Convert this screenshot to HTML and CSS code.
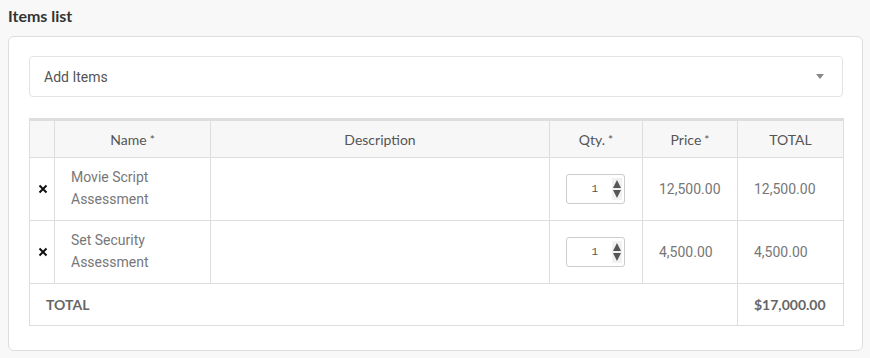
FILE: index.html
```html
<!DOCTYPE html>
<html>
<head>
<meta charset="utf-8">
<link rel="stylesheet" href="styles.css">
</head>
<body>
<h2 class="title">Items list</h2>
<div class="card">
  <div class="select">
    <span>Add Items</span>
    <span class="caret"></span>
  </div>
  <table class="items">
    <colgroup>
      <col class="c-x"><col class="c-name"><col class="c-desc"><col class="c-qty"><col class="c-price"><col class="c-total">
    </colgroup>
    <thead>
      <tr>
        <th></th>
        <th>Name<span class="req">*</span></th>
        <th>Description</th>
        <th>Qty.<span class="req">*</span></th>
        <th>Price<span class="req">*</span></th>
        <th>TOTAL</th>
      </tr>
    </thead>
    <tbody>
      <tr>
        <td class="x"><svg class="xicon" viewBox="0 0 10 10" width="10" height="10"><path d="M1.5 1.5 L8.5 8.5 M8.5 1.5 L1.5 8.5" stroke="#111" stroke-width="2" stroke-linecap="butt"/></svg></td>
        <td class="name">Movie Script<br>Assessment</td>
        <td></td>
        <td class="qty"><div class="spin"><span class="val">1</span><span class="arrows"><span class="up"></span><span class="down"></span></span></div></td>
        <td class="num">12,500.00</td>
        <td class="num">12,500.00</td>
      </tr>
      <tr>
        <td class="x"><svg class="xicon" viewBox="0 0 10 10" width="10" height="10"><path d="M1.5 1.5 L8.5 8.5 M8.5 1.5 L1.5 8.5" stroke="#111" stroke-width="2" stroke-linecap="butt"/></svg></td>
        <td class="name">Set Security<br>Assessment</td>
        <td></td>
        <td class="qty"><div class="spin"><span class="val">1</span><span class="arrows"><span class="up"></span><span class="down"></span></span></div></td>
        <td class="num">4,500.00</td>
        <td class="num">4,500.00</td>
      </tr>
      <tr class="total">
        <td colspan="5" class="tlabel">TOTAL</td>
        <td class="tval">$17,000.00</td>
      </tr>
    </tbody>
  </table>
</div>
</body>
</html>
```
FILE: styles.css
```css
html, body {
  margin: 0;
  padding: 0;
  background: #f8f8f8;
}
body {
  padding: 6px 8px 0 8px;
  font-family: Lato, "Liberation Sans", sans-serif;
}
.title {
  margin: 0 0 12px 0;
  font-size: 16px;
  font-weight: 700;
  color: #333;
  line-height: 20px;
  height: 18px;
}
.card {
  background: #fff;
  border: 1px solid #ddd;
  border-radius: 6px;
  padding: 19px 19px 24px 20px;
  width: 814px;
}
.select {
  height: 39px;
  border: 1px solid #e3e3e3;
  border-radius: 4px;
  display: flex;
  align-items: center;
  justify-content: space-between;
  padding: 0 18px 0 14px;
  font-family: Roboto, "Liberation Sans", sans-serif;
  font-size: 14px;
  color: #555;
}
.caret {
  width: 0;
  height: 0;
  border-left: 4px solid transparent;
  border-right: 4px solid transparent;
  border-top: 5px solid #888;
}
.items {
  margin-top: 21px;
  width: 814px;
  border-collapse: collapse;
  table-layout: fixed;
  border: 1px solid #ddd;
  border-top: 3px solid #ddd;
}
.c-x { width: 25px; }
.c-name { width: 156px; }
.c-desc { width: 339px; }
.c-qty { width: 93px; }
.c-price { width: 95px; }
.c-total { width: 106px; }
th, td {
  border: 1px solid #ddd;
  padding: 0;
}
th {
  background: #f7f7f7;
  height: 36px;
  font-weight: 400;
  font-size: 14px;
  color: #555;
  text-align: center;
}
.req {
  font-size: 12px;
  vertical-align: 1px;
  margin-left: 3px;
}
td {
  height: 62px;
  font-family: Roboto, "Liberation Sans", sans-serif;
  font-size: 14px;
  color: #777;
}
td.x {
  text-align: center;
  line-height: 0;
  padding-left: 2px;
}
.xicon {
  display: inline-block;
}
td.name {
  height: 60px;
  line-height: 22px;
  padding-left: 16px;
  padding-bottom: 2px;
}
td.num {
  padding-left: 16px;
}
td.qty {
  padding-left: 16px;
}
.spin {
  width: 57px;
  height: 28px;
  border: 1px solid #ccc;
  border-radius: 3px;
  display: flex;
  align-items: center;
  justify-content: flex-end;
  box-sizing: content-box;
}
.val {
  font-family: "Liberation Mono", monospace;
  font-size: 11px;
  color: #555;
  margin-right: 14px;
}
.arrows {
  display: flex;
  flex-direction: column;
  gap: 2px;
  margin-right: 2px;
  padding: 2px 1px;
  background: #f1f1f1;
}
.up, .down {
  width: 0;
  height: 0;
  border-left: 4px solid transparent;
  border-right: 4px solid transparent;
}
.up { border-bottom: 8px solid #555; }
.down { border-top: 8px solid #555; }
.total td {
  height: 41px;
  font-family: Lato, "Liberation Sans", sans-serif;
  font-weight: 700;
  color: #666;
}
.tlabel { padding-left: 16px; }
.tval { padding-left: 16px; }
```
